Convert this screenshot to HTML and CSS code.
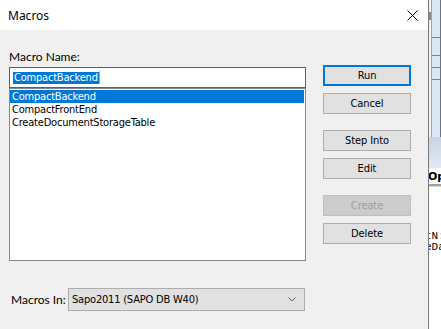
FILE: index.html
```html
<!DOCTYPE html>
<html>
<head>
<meta charset="utf-8">
<link rel="stylesheet" href="styles.css">
</head>
<body>
<div class="screen">
  <div class="dialog">
    <div class="titlebar">
      <span class="title">Macros</span>
      <svg class="close" width="11" height="11" viewBox="0 0 11 11"><path d="M0.5 0.5 L10.5 10.5 M10.5 0.5 L0.5 10.5" stroke="#000" stroke-width="1" fill="none"/></svg>
    </div>
    <div class="body">
      <div class="main">
        <div class="left">
          <div class="lbl name-lbl">Macro Name:</div>
          <div class="input"><span class="sel">CompactBackend</span><span class="caret"></span></div>
          <div class="list">
            <div class="item selected">CompactBackend</div>
            <div class="item">CompactFrontEnd</div>
            <div class="item">CreateDocumentStorageTable</div>
          </div>
        </div>
        <div class="buttons">
          <div class="group">
            <div class="btn default">Run</div>
            <div class="btn">Cancel</div>
          </div>
          <div class="group">
            <div class="btn">Step Into</div>
            <div class="btn">Edit</div>
          </div>
          <div class="group">
            <div class="btn disabled">Create</div>
            <div class="btn">Delete</div>
          </div>
        </div>
      </div>
      <div class="bottom">
        <div class="lbl">Macros In:</div>
        <div class="combo">
          <span class="combo-text">Sapo2011 (SAPO DB W40)</span>
          <svg class="chev" width="8" height="5" viewBox="0 0 8 5"><path d="M0.5 0.5 L4 4 L7.5 0.5" stroke="#606060" stroke-width="1" fill="none"/></svg>
        </div>
      </div>
    </div>
  </div>
  <div class="strip">
    <div class="strip-top">
      <div class="st-gap"><div class="thumb"></div></div>
      <div class="st-line"></div>
      <div class="st-band">
        <div class="hl h1"></div>
        <div class="hl h2"></div>
        <div class="hl h3"></div>
        <div class="hl h4"></div>
      </div>
      <div class="st-dark"></div>
    </div>
    <div class="strip-head"></div>
    <div class="strip-row"><span class="op">Op</span></div>
    <div class="strip-sep"></div>
    <div class="strip-rest">
      <div class="code c1">tN:</div>
      <div class="code c2">eDa</div>
    </div>
  </div>
</div>
</body>
</html>
```

FILE: styles.css
```css
* { box-sizing: border-box; }
html, body { margin: 0; padding: 0; }
body { width: 441px; height: 329px; overflow: hidden; background: #fff; }

.screen { display: flex; width: 441px; height: 329px; }

.dialog {
  width: 429px;
  height: 329px;
  border-right: 1px solid #7a7a7a;
  display: flex;
  flex-direction: column;
}

.titlebar {
  height: 30px;
  background: #fff;
  display: flex;
  align-items: center;
  padding-left: 8px;
}
.title {
  font-family: "Noto Sans", sans-serif;
  font-size: 12px;
  color: #000;
}
.close { margin-left: auto; margin-right: 10px; }

.body {
  flex: 1;
  background: #f0f0f0;
  display: flex;
  flex-direction: column;
}

.main { display: flex; align-items: flex-start; padding-left: 9px; }

.left { width: 297px; padding-top: 19px; display: flex; flex-direction: column; }

.lbl {
  font-family: "Lato", "Noto Sans", sans-serif;
  font-size: 12px;
  line-height: 16px;
  color: #000;
  white-space: nowrap;
}
.name-lbl { padding-left: 0; }

.input {
  margin-top: 2px;
  height: 21px;
  border: 1px solid #0078d7;
  background: #fff;
  padding: 4px 0 0 3px;
  display: flex;
  align-items: flex-start;
}
.sel {
  display: block;
  height: 12px;
  line-height: 12px;
  background: #0078d7;
  color: #fff;
  font-family: "DejaVu Sans Condensed", sans-serif;
  font-size: 11px;
  letter-spacing: -0.2px;
  padding: 0 1px;
}
.caret { display: block; width: 1px; height: 13px; margin-top: -1px; background: #f39a3c; }

.list {
  height: 173px;
  border: 1px solid #828790;
  background: #fff;
  padding: 1px 1px 1px 0;
}
.item {
  height: 13px;
  line-height: 13px;
  padding-left: 2px;
  font-family: "DejaVu Sans Condensed", sans-serif;
  font-size: 11px;
  letter-spacing: -0.2px;
  color: #000;
  white-space: nowrap;
}
.item.selected { background: #0078d7; color: #fff; }

.buttons {
  margin-left: 17px;
  margin-top: 35px;
  width: 88px;
  display: flex;
  flex-direction: column;
  gap: 16px;
}
.group { display: flex; flex-direction: column; gap: 7px; }
.btn {
  height: 21px;
  border: 1px solid #adadad;
  background: #e1e1e1;
  display: flex;
  align-items: center;
  justify-content: center;
  font-family: "DejaVu Sans Condensed", sans-serif;
  font-size: 11px;
  letter-spacing: -0.1px;
  color: #000;
}
.btn.default { border: 2px solid #0078d7; }
.btn.disabled { background: #cccccc; border-color: #bfbfbf; color: #a0a0a0; }

.bottom {
  margin-top: 27px;
  padding-left: 11px;
  display: grid;
  grid-template-columns: 57px 237px;
  align-items: center;
}
.combo {
  height: 23px;
  border: 1px solid #adadad;
  background: #e1e1e1;
  display: flex;
  align-items: center;
  padding-left: 3px;
}
.combo-text {
  font-family: "DejaVu Sans Condensed", sans-serif;
  font-size: 11px;
  letter-spacing: -0.2px;
  color: #000;
}
.chev { margin-left: auto; margin-right: 8px; }

/* background window strip */
.strip { width: 12px; height: 329px; display: flex; flex-direction: column; overflow: hidden; }
.strip-top { height: 137px; display: flex; }
.st-gap { width: 2px; background: #f3f3f3; }
.thumb { margin-top: 12px; height: 8px; background: #8a8a8a; }
.st-line { width: 1px; background: #9aa6b4; }
.st-band { width: 8px; background: #dce7f5; display: flex; flex-direction: column; }
.hl { height: 1px; background: #7c8796; }
.h1 { margin-top: 37px; }
.h2 { margin-top: 17px; }
.h3 { margin-top: 11px; }
.h4 { margin-top: 11px; }
.st-dark { width: 1px; background: #6d7380; }
.strip-head { height: 31px; background: linear-gradient(#c7d4e4, #e1e9f3); }
.strip-row {
  height: 16px;
  background: #fff;
  display: flex;
  align-items: center;
  overflow: hidden;
}
.op {
  font-family: "DejaVu Sans", sans-serif;
  font-weight: bold;
  font-size: 11px;
  margin-left: -1px;
  white-space: nowrap;
  color: #000;
}
.strip-sep { height: 3px; background: #a0a0a0; border-bottom: 1px solid #d8d8d8; }
.strip-rest { flex: 1; background: #fff; padding-top: 44px; overflow: hidden; }
.code {
  font-family: "Liberation Mono", monospace;
  font-size: 11px;
  line-height: 11px;
  white-space: nowrap;
  color: #000;
  margin-left: -4px;
}
```
